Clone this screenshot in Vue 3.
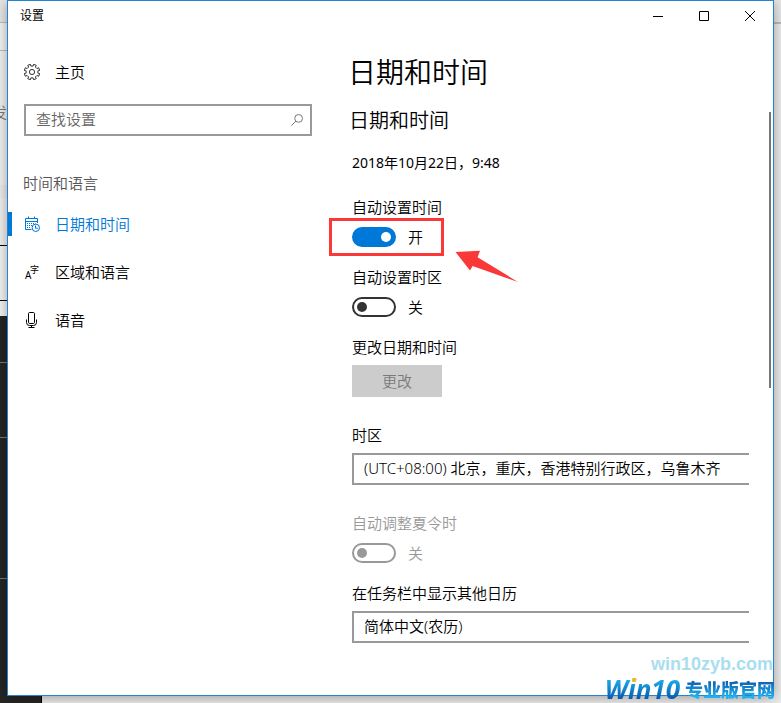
<script setup>
import { ref } from 'vue'

const navItems = [
  { id: 'datetime', label: '日期和时间' },
  { id: 'region', label: '区域和语言' },
  { id: 'speech', label: '语音' }
]
const active = ref('datetime')
const query = ref('')
const autoTime = ref(true)
const autoZone = ref(false)
const daylight = ref(false)

// Outline of a cog with the given number of teeth, centred in a 16px box.
function cogPath(teeth, outer, inner) {
  const step = (Math.PI * 2) / teeth
  const points = []
  for (let i = 0; i < teeth; i++) {
    const a = (i + 0.5) * step - Math.PI / 2
    for (const [offset, r] of [[-0.26, inner], [-0.24, outer], [0.24, outer], [0.26, inner]]) {
      const t = a + offset * step
      points.push(`${(8 + r * Math.cos(t)).toFixed(2)} ${(8 + r * Math.sin(t)).toFixed(2)}`)
    }
  }
  return `M${points.join('L')}Z`
}
const cog = cogPath(8, 7.9, 6)
</script>

<template>
  <div class="desktop">
    <div class="backdrop" aria-hidden="true">
      <div class="strip-left"><span>发</span></div>
      <div class="strip-bottom"></div>
      <div class="strip-right"></div>
    </div>

    <div class="window">
      <header class="titlebar">
        <span class="title">设置</span>
        <button type="button" aria-label="最小化">
          <svg width="10" height="10" viewBox="0 0 10 10"><path d="M0 5.5H10" /></svg>
        </button>
        <button type="button" aria-label="最大化">
          <svg width="10" height="10" viewBox="0 0 10 10"><path d="M.5 .5H9.5V9.5H.5Z" /></svg>
        </button>
        <button type="button" aria-label="关闭">
          <svg width="10" height="10" viewBox="0 0 10 10"><path d="M0 0L10 10M10 0L0 10" /></svg>
        </button>
      </header>

      <div class="body">
        <nav class="sidebar">
          <a class="item" href="#home">
            <svg class="icon cog" viewBox="0 0 16 16"><path :d="cog" /><circle cx="8" cy="8" r="2.6" /></svg>
            <span>主页</span>
          </a>

          <div class="search">
            <input v-model="query" type="text" placeholder="查找设置" aria-label="查找设置" />
            <svg width="12" height="12" viewBox="0 0 12 12"><circle cx="7.6" cy="4.4" r="3.9" /><path d="M4.9 7.1L.3 11.7" /></svg>
          </div>

          <h3>时间和语言</h3>

          <a
            v-for="item in navItems"
            :key="item.id"
            class="item"
            :class="{ active: active === item.id }"
            :href="'#' + item.id"
            @click="active = item.id"
          >
            <svg v-if="item.id === 'datetime'" class="icon" viewBox="0 0 16 16">
              <path d="M7.5 13.5H1.5V2.5H13.5V7M1.5 5.5H13.5M4.5 .5V3M10.5 .5V3" />
              <path class="dots" d="M3 7.5H11.5M3 9.5H8M3 11.5H7" />
              <circle cx="11.8" cy="11.8" r="3.7" />
              <path d="M11.5 9.5V12.2H13.8" />
            </svg>
            <svg v-else-if="item.id === 'region'" class="icon glyphs" viewBox="0 0 16 16">
              <text x="1" y="15" font-size="10">A</text>
              <text x="6" y="9" font-size="9">字</text>
            </svg>
            <svg v-else class="icon" viewBox="0 0 16 16">
              <rect x="4.5" y=".5" width="6" height="11" rx="1.2" />
              <path d="M2.5 7.5V10.5Q2.5 13.5 5.5 13.5H9.5Q12.5 13.5 12.5 10.5V7.5M7.5 13.5V15.5M4.5 15.5H10.5" />
            </svg>
            <span>{{ item.label }}</span>
          </a>
        </nav>

        <main class="content">
          <h1>日期和时间</h1>
          <h2>日期和时间</h2>
          <p class="now">2018年10月22日，9:48</p>

          <div class="field">
            <label for="auto-time">自动设置时间</label>
            <div class="toggle">
              <input id="auto-time" v-model="autoTime" type="checkbox" role="switch" />
              <span>{{ autoTime ? '开' : '关' }}</span>
              <div class="highlight"></div>
              <svg class="arrow" width="64" height="32" viewBox="0 0 64 32"><path d="M.5 2L25 .7L22.6 7.3L63 32L17.6 16L15 20.4Z" /></svg>
            </div>
          </div>

          <div class="field">
            <label for="auto-zone">自动设置时区</label>
            <div class="toggle">
              <input id="auto-zone" v-model="autoZone" type="checkbox" role="switch" />
              <span>{{ autoZone ? '开' : '关' }}</span>
            </div>
          </div>

          <div class="field boxed">
            <label for="change">更改日期和时间</label>
            <button id="change" class="change" type="button" disabled>更改</button>
          </div>

          <div class="field boxed">
            <label for="zone">时区</label>
            <select id="zone">
              <option>(UTC+08:00) 北京，重庆，香港特别行政区，乌鲁木齐</option>
            </select>
          </div>

          <div class="field disabled">
            <label for="daylight">自动调整夏令时</label>
            <div class="toggle">
              <input id="daylight" v-model="daylight" type="checkbox" role="switch" disabled />
              <span>{{ daylight ? '开' : '关' }}</span>
            </div>
          </div>

          <div class="field boxed">
            <label for="calendar">在任务栏中显示其他日历</label>
            <select id="calendar">
              <option>简体中文(农历)</option>
            </select>
          </div>
        </main>

        <div class="scrollbar"></div>
      </div>
    </div>

    <div class="watermark">
      <span class="site">win10zyb.com</span>
      <span class="brand"><b class="latin">Win10</b><b class="han">专业版官网</b></span>
    </div>
  </div>
</template>

<style>
body {
  margin: 0;
}
</style>

<style scoped>
* {
  box-sizing: border-box;
}
.desktop {
  position: relative;
  min-height: 100vh;
  padding: 0 7px 7px;
  overflow: hidden;
  font: 350 15px/20px "Noto Sans", "Noto Sans CJK SC", sans-serif;
  color: #000;
}
.backdrop {
  position: absolute;
  inset: 0;
  display: grid;
  grid-template: 1fr 7px / 7px 1fr 7px;
}
.strip-left {
  display: flex;
  justify-content: flex-end;
  padding-top: 102px;
  overflow: hidden;
  font-size: 15px;
  color: #777;
  background: linear-gradient(
    #e6e6e6 22px, #bbb 22px 23px, #f3f3f3 23px 50px, #bbb 50px 51px, #f1f1f1 51px 185px,
    #eee9ea 185px 198px, #f0f0f0 198px 245px, #000 245px 246px, #f3f3f3 246px 300px,
    #000 300px 301px, #f3f3f3 301px 316px, #262626 316px 362px, #777 362px 363px,
    #262626 363px 437px, #777 437px 438px, #262626 438px 578px, #777 578px 579px, #262626 579px
  );
}
.strip-right {
  grid-area: 1 / 3 / 3 / 4;
  background: linear-gradient(#e8e8e8 22px, #bbb 22px 24px, #ececec 24px);
}
.strip-bottom {
  grid-area: 2 / 1 / 3 / 3;
  background: linear-gradient(90deg, #262626 41px, #000 41px 42px, #eee 42px);
}
.window {
  position: relative;
  display: flex;
  flex-direction: column;
  min-height: calc(100vh - 7px);
  border: 1px solid #2583cf;
  background: #fff;
  box-shadow: 0 2px 12px rgba(0, 0, 0, 0.35);
}
.titlebar {
  display: flex;
  height: 30px;
}
.title {
  flex: 1;
  padding-left: 12px;
  font-size: 12px;
  line-height: 29px;
  font-weight: 400;
}
.titlebar button {
  display: grid;
  place-items: center;
  width: 46px;
  padding: 0;
  border: 0;
  background: none;
}
svg {
  display: block;
  fill: none;
  stroke: currentColor;
}
.body {
  display: flex;
  flex: 1;
}
.sidebar {
  width: 320px;
  padding-top: 17px;
}
.item {
  display: flex;
  align-items: center;
  gap: 15px;
  height: 48px;
  padding-left: 16px;
  color: #000;
  text-decoration: none;
}
.item.active {
  padding-left: 12px;
  color: #0078d7;
}
.item.active::before {
  content: "";
  width: 4px;
  height: 24px;
  margin: 0 -3px 0 -12px;
  background: #0078d7;
}
.icon {
  width: 16px;
  height: 16px;
}
.cog {
  stroke: #333;
}
.dots {
  stroke-dasharray: 1 1;
}
.glyphs {
  overflow: visible;
  fill: currentColor;
  stroke: none;
  font-weight: 400;
}
.search {
  display: flex;
  align-items: center;
  height: 32px;
  margin: 8px 16px 32px;
  padding: 0 7px 0 10px;
  border: 2px solid #999;
  color: #777;
}
.search input {
  flex: 1;
  min-width: 0;
  height: 28px;
  padding: 0 0 2px;
  border: 0;
  outline: 0;
  background: none;
  font: inherit;
  color: #000;
}
.search input::placeholder {
  color: #666;
  opacity: 1;
}
h1,
h2,
h3,
p {
  margin: 0;
  font-weight: 350;
}
h3 {
  padding-left: 15px;
  font-size: 15px;
  line-height: 30px;
  padding-bottom: 2px;
  color: #555;
}
.content {
  flex: 1;
  min-width: 0;
  padding: 21px 20px 0 24px;
}
h1 {
  margin-left: -4px;
  font-size: 28px;
  line-height: 40px;
}
h2 {
  margin: 15px 0 18px -3px;
  font-size: 20px;
  line-height: 28px;
}
.now {
  margin-bottom: 24px;
  font-size: 14px;
  font-weight: 400;
}
.field {
  display: flex;
  flex-direction: column;
  align-items: flex-start;
  gap: 10px;
  margin-bottom: 20px;
}
.field.boxed {
  gap: 8px;
  margin-bottom: 28px;
}
.field.disabled {
  color: #999;
}
.toggle {
  position: relative;
  display: flex;
  align-items: center;
  gap: 12px;
  height: 20px;
}
.toggle input {
  appearance: none;
  display: flex;
  align-items: center;
  width: 44px;
  height: 20px;
  margin: 0;
  padding: 0 3px;
  border: 2px solid #333;
  border-radius: 10px;
  color: #333;
}
.toggle input::before {
  content: "";
  width: 10px;
  height: 10px;
  border-radius: 50%;
  background: currentColor;
}
.toggle input:checked {
  justify-content: flex-end;
  border-color: #0078d7;
  background: #0078d7;
  color: #fff;
}
.toggle input:disabled {
  border-color: #999;
  color: #999;
}
.highlight {
  position: absolute;
  top: -9px;
  left: -23px;
  width: 115px;
  height: 38px;
  border: 3px solid #fb3838;
  pointer-events: none;
}
.arrow {
  position: absolute;
  top: 23px;
  left: 103px;
  fill: #fb3838;
  stroke: none;
}
.change {
  width: 90px;
  height: 32px;
  padding: 0;
  border: 0;
  background: #ccc;
  font: inherit;
  color: #7a7a7a;
}
select {
  appearance: none;
  width: 100%;
  height: 32px;
  padding: 0 10px 2px;
  border: 2px solid #999;
  border-right: 0;
  border-radius: 0;
  background: #fff;
  font: inherit;
  color: #000;
}
.scrollbar {
  width: 2px;
  height: 276px;
  margin: 81px 2px 0 0;
  background: #777;
}
.watermark {
  position: absolute;
  right: 6px;
  bottom: 0;
  display: flex;
  flex-direction: column;
  align-items: flex-end;
  pointer-events: none;
}
.site {
  padding-right: 2px;
  font: 700 18px/22px "Liberation Sans", sans-serif;
  color: #a9deee;
}
.brand {
  display: flex;
  align-items: center;
  gap: 3px;
  height: 28px;
}
.brand b {
  background: linear-gradient(#19a9ea 20%, #0a5fae 80%);
  background-clip: text;
  color: transparent;
}
.brand .latin {
  padding-right: 2px;
  font: italic 700 26px/28px "Open Sans", sans-serif;
  background-image: linear-gradient(#fdb913, #fdb913), linear-gradient(#19a9ea 20%, #0a5fae 80%);
  background-position: 27px 0, 0 0;
  background-size: 9px 9px, auto;
  background-repeat: no-repeat;
}
.brand .han {
  font: 900 18px/26px "Noto Sans CJK SC", sans-serif;
  background-image: linear-gradient(#0b5fae 20%, #22b2ee 80%);
}
</style>
